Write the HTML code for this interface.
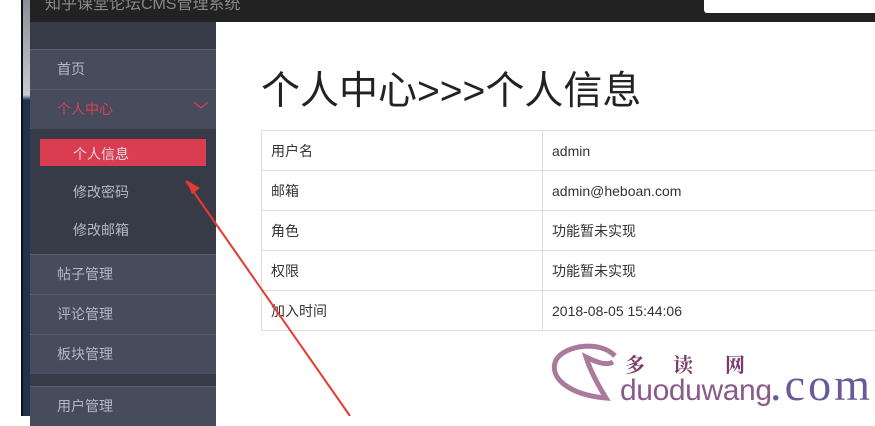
<!DOCTYPE html>
<html><head><meta charset="utf-8"><style>
body{margin:0;width:875px;height:416px;overflow:hidden;background:#fff;position:relative;font-family:"Liberation Sans","Noto Sans CJK SC",sans-serif}
.hdr{position:absolute;left:30px;top:0;width:845px;height:22px;background:#222}
.search{position:absolute;left:674px;top:-4px;width:180px;height:17px;background:#fff;border-radius:3px}
.edge{position:absolute;left:21px;top:0;width:9px;height:416px;background:linear-gradient(#8a8f96,#c8ccd0 95px,#1e3350 100px,#1e3350)}
.edge:before{content:"";position:absolute;left:0;top:0;width:2px;height:416px;background:#111}
.sb{position:absolute;left:30px;top:22px;width:186px;height:394px;background:#373b48}
.it{position:absolute;left:0;width:186px;height:39px;background:#474c5d;border-top:1px solid #5a5f6e;color:#b5b8c2;font-size:14px;line-height:39px;text-indent:27px}
.sub{position:absolute;left:43px;color:#b5b8c2;font-size:14px}
h1{position:absolute;left:261px;top:60px;margin:0;font-weight:normal;font-size:39px;color:#222}
table{position:absolute;left:261px;top:130px;width:620px;border-collapse:collapse;font-size:14px;color:#333}
td{border:1px solid #ddd;height:39px;padding:0 9px}
</style></head><body>
<div class="hdr"><div style="position:absolute;left:15px;top:-10px;color:#888;font-size:16px">知乎课堂论坛CMS管理系统</div><div class="search"></div></div>
<div class="edge"></div>
<div class="sb">
<div class="it" style="top:27px">首页</div>
<div class="it" style="top:67px;color:#dc3d52">个人中心<svg style="position:absolute;left:163px;top:10px" width="16" height="10"><polyline points="1,2 8,8 15,2" fill="none" stroke="#dc3d52" stroke-width="1.2"/></svg></div>
<div style="position:absolute;left:10px;top:117px;width:166px;height:27px;background:#da3d52"></div>
<div class="sub" style="top:122px;color:#ddd">个人信息</div>
<div class="sub" style="top:160px">修改密码</div>
<div class="sub" style="top:198px">修改邮箱</div>
<div class="it" style="top:232px">帖子管理</div>
<div class="it" style="top:272px">评论管理</div>
<div class="it" style="top:312px">板块管理</div>
<div class="it" style="top:364px">用户管理</div>
</div>
<h1>个人中心&gt;&gt;&gt;个人信息</h1>
<table>
<tr><td style="width:262px">用户名</td><td>admin</td></tr>
<tr><td>邮箱</td><td>admin@heboan.com</td></tr>
<tr><td>角色</td><td>功能暂未实现</td></tr>
<tr><td>权限</td><td>功能暂未实现</td></tr>
<tr><td>加入时间</td><td>2018-08-05 15:44:06</td></tr>
</table>
<svg style="position:absolute;left:0;top:0" width="875" height="416">
<line x1="186" y1="181" x2="350" y2="416" stroke="#e8392f" stroke-width="2"/>
<polygon points="186,180 200,188 192,194" fill="#e8392f"/>
<path d="M615 356 C600 340 565 345 556 360 C548 378 570 395 606 398 C598 385 590 370 586 357 C596 362 606 366 613 362" fill="none" stroke="#a97a9c" stroke-width="5"/>
<text x="625" y="372" font-size="20" fill="#7a3a6a" font-family="Noto Serif CJK SC,serif" font-weight="bold">多</text>
<text x="673" y="372" font-size="20" fill="#7a3a6a" font-family="Noto Serif CJK SC,serif" font-weight="bold">读</text>
<text x="725" y="372" font-size="20" fill="#7a3a6a" font-family="Noto Serif CJK SC,serif" font-weight="bold">网</text>
<text x="620" y="400" font-size="30" fill="#8a5a8a" textLength="152">duoduwang</text>
<text x="770" y="400" font-size="46" fill="#6a5a9a" font-family="Liberation Serif,serif" textLength="100">.com</text>
</svg>
</body></html>
